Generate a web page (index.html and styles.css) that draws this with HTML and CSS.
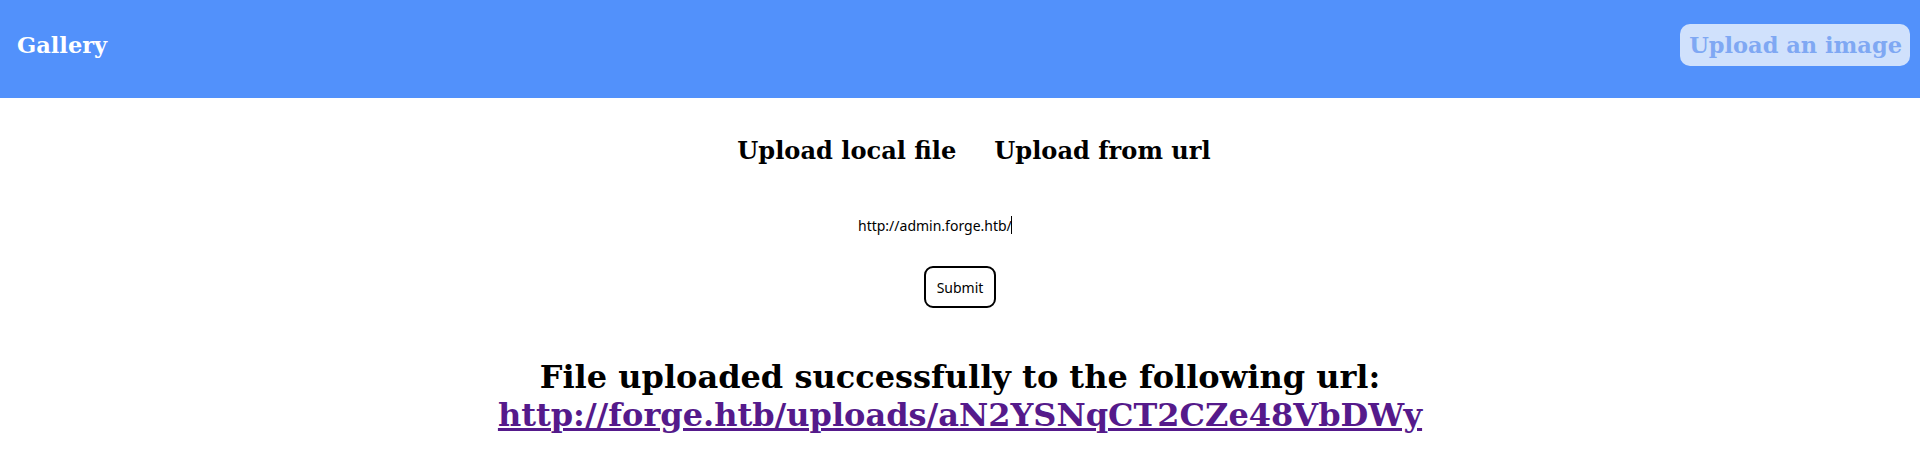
FILE: index.html
```html
<!DOCTYPE html>
<html>
<head>
<meta charset="utf-8">
<title>Gallery</title>
<link rel="stylesheet" href="styles.css">
</head>
<body>
<header class="topbar">
  <span class="brand">Gallery</span>
  <a class="upload-btn" href="#">Upload an image</a>
</header>
<main class="content">
  <nav class="tabs">
    <span class="tab">Upload local file</span>
    <span class="tab">Upload from url</span>
  </nav>
  <form class="url-form">
    <span class="input-wrap">
      <input class="url-input" type="text" value="http://admin.forge.htb/">
      <span class="caret"></span>
    </span>
    <button class="submit-btn" type="button">Submit</button>
  </form>
  <h1 class="result">File uploaded successfully to the following url:<br><a class="result-link" href="#">http://forge.htb/uploads/aN2YSNqCT2CZe48VbDWy</a></h1>
</main>
</body>
</html>
```
FILE: styles.css
```css
html, body {
  margin: 0;
  padding: 0;
  background: #ffffff;
  font-family: "DejaVu Serif", serif;
}
.topbar {
  height: 98px;
  box-sizing: border-box;
  background: #5291fb;
  display: flex;
  align-items: center;
  justify-content: space-between;
  padding: 0 10px 8px 17px;
}
.brand {
  color: #ffffff;
  font-weight: bold;
  font-size: 22.5px;
}
.upload-btn {
  display: block;
  height: 42px;
  box-sizing: border-box;
  line-height: 42px;
  padding: 0 8px 0 9px;
  border-radius: 10px;
  background: #d0e1fc;
  color: #7fa8f3;
  font-weight: bold;
  font-size: 22.5px;
  text-decoration: none;
}
.content {
  display: flex;
  flex-direction: column;
  align-items: center;
  padding-top: 38px;
}
.tabs {
  display: flex;
  gap: 38px;
  margin-left: 28px;
  font-weight: bold;
  font-size: 24.1px;
  color: #000;
}
.url-form {
  display: flex;
  flex-direction: column;
  align-items: center;
  margin-top: 49px;
}
.input-wrap {
  position: relative;
  display: block;
  width: 208px;
  height: 22px;
}
.url-input {
  display: block;
  width: 208px;
  height: 22px;
  box-sizing: border-box;
  border: none;
  outline: none;
  padding: 0 2px;
  font-family: "Noto Sans", sans-serif;
  font-size: 14px;
  color: #000;
  background: transparent;
}
.caret {
  position: absolute;
  left: 155px;
  top: 2px;
  width: 1px;
  height: 18px;
  background: #000;
}
.submit-btn {
  margin-top: 30px;
  width: 72px;
  height: 42px;
  box-sizing: border-box;
  border: 2px solid #000;
  border-radius: 9px;
  background: #fff;
  font-family: "Noto Sans", sans-serif;
  font-size: 14px;
  color: #000;
  padding: 0;
}
.result {
  margin: 50px 0 0;
  font-size: 32px;
  font-weight: bold;
  text-align: center;
  line-height: normal;
  color: #000;
}
.result-link {
  color: #551a8b;
}
```
